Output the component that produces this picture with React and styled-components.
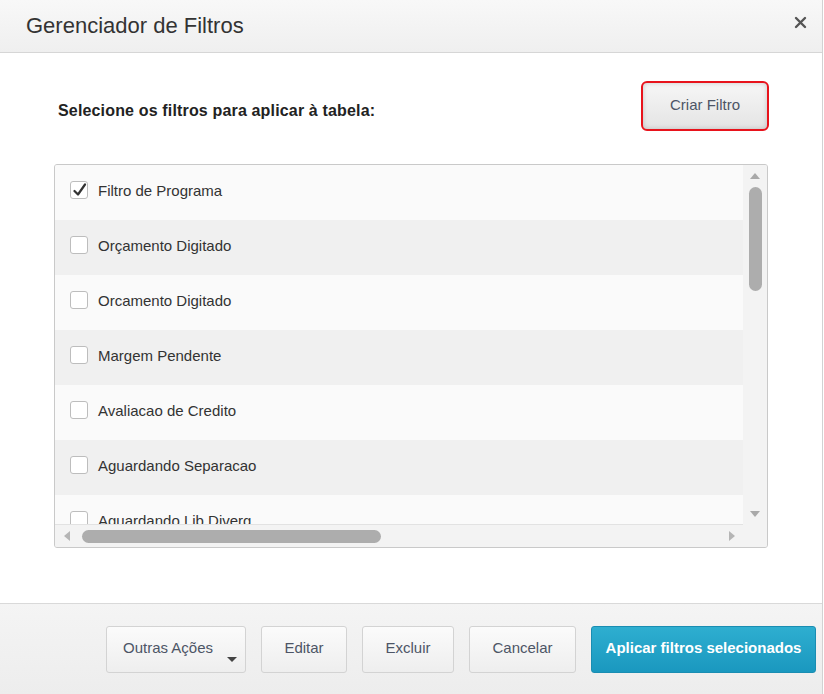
import React from 'react';
import styled, { createGlobalStyle } from 'styled-components';

const GlobalStyle = createGlobalStyle`
  html, body {
    margin: 0;
    padding: 0;
    background: #ffffff;
  }
  body {
    font-family: 'Liberation Sans', Arial, sans-serif;
  }
`;

const Modal = styled.div`
  width: 822px;
  height: 694px;
  display: flex;
  flex-direction: column;
  border-right: 1px solid #d2d2d2;
  background: #fff;
`;

const Header = styled.div`
  height: 52px;
  flex: none;
  display: flex;
  align-items: center;
  justify-content: space-between;
  padding: 0 14px 0 26px;
  background: linear-gradient(#f8f8f8, #efefef);
  border-bottom: 1px solid #d6d6d6;
`;

const Title = styled.h1`
  margin: 0;
  font-size: 22px;
  font-weight: normal;
  color: #333;
  padding-bottom: 1px;
`;

const CloseButton = styled.button`
  border: 0;
  background: none;
  padding: 0;
  width: 14px;
  height: 14px;
  display: flex;
  margin-bottom: 6px;
  cursor: pointer;
`;

const Body = styled.div`
  flex: 1;
  padding: 28px 54px 0 54px;
`;

const TopRow = styled.div`
  display: flex;
  align-items: center;
  justify-content: space-between;
  height: 50px;
`;

const Label = styled.div`
  font-size: 16px;
  font-weight: bold;
  letter-spacing: 0.16px;
  color: #222;
  padding: 10px 0 0 4px;
`;

const CreateButton = styled.button`
  width: 128px;
  height: 50px;
  margin-right: -1px;
  border: 2px solid #e8131c;
  border-radius: 6px;
  background: linear-gradient(#f6f6f6, #e4e4e4);
  box-shadow: inset 0 0 5px rgba(0, 0, 0, 0.18);
  font-family: inherit;
  font-size: 15px;
  color: #4d5566;
  padding: 0 0 4px;
  cursor: pointer;
`;

const ListBox = styled.div`
  margin-top: 33px;
  height: 382px;
  border: 1px solid #c9c9c9;
  border-radius: 3px;
  display: grid;
  grid-template-columns: 1fr 24px;
  grid-template-rows: 1fr 22px;
  overflow: hidden;
  background: #f4f4f4;
`;

const Rows = styled.div`
  overflow: hidden;
  border-bottom: 1px solid #e2e2e2;
`;

const Row = styled.label`
  height: 55px;
  display: flex;
  align-items: center;
  gap: 10px;
  padding: 0 0 5px 15px;
  box-sizing: border-box;
  background: ${(p) => (p.$even ? '#f0f0f0' : '#fafafa')};
  font-size: 15px;
  color: #333;
`;

const Box = styled.span`
  width: 16px;
  height: 16px;
  border: 1px solid #bdbdbd;
  border-radius: 3px;
  background: #fff;
  display: flex;
  align-items: center;
  justify-content: center;
  flex: none;
`;

const VScroll = styled.div`
  display: flex;
  flex-direction: column;
  align-items: center;
  padding: 8px 0 8px;
  background: #f3f3f3;
`;

const HScroll = styled.div`
  display: flex;
  align-items: center;
  padding: 0 8px 0 9px;
  background: #f3f3f3;
`;

const Corner = styled.div`
  background: #f3f3f3;
`;

const Arrow = styled.span`
  width: 0;
  height: 0;
  flex: none;
  border-style: solid;
  border-color: transparent;
  ${(p) =>
    p.$dir === 'up'
      ? 'border-width: 0 5px 6px 5px; border-bottom-color: #a9a9a9;'
      : p.$dir === 'down'
      ? 'border-width: 6px 5px 0 5px; border-top-color: #a9a9a9;'
      : p.$dir === 'left'
      ? 'border-width: 5px 6px 5px 0; border-right-color: #b5b5b5;'
      : 'border-width: 5px 0 5px 6px; border-left-color: #b5b5b5;'}
`;

const VThumb = styled.div`
  width: 13px;
  height: 104px;
  margin-top: 8px;
  border-radius: 7px;
  background: #adadad;
`;

const HThumb = styled.div`
  height: 13px;
  width: 299px;
  margin-left: 12px;
  border-radius: 7px;
  background: #adadad;
`;

const Spacer = styled.div`
  flex: 1;
`;

const Footer = styled.div`
  height: 91px;
  flex: none;
  border-top: 1px solid #d9d9d9;
  background: linear-gradient(#f4f4f4, #ededed);
  display: flex;
  align-items: flex-start;
  justify-content: flex-end;
  gap: 15px;
  padding: 22px 6px 0 0;
  box-sizing: border-box;
`;

const Button = styled.button`
  position: relative;
  width: ${(p) => p.$w}px;
  height: 47px;
  border-radius: 3px;
  font-family: inherit;
  font-size: 15px;
  cursor: pointer;
  text-align: ${(p) => (p.$menu ? 'left' : 'center')};
  padding: ${(p) => (p.$menu ? '0 0 5px 16px' : '0 0 5px')};
  border: 1px solid ${(p) => (p.$primary ? '#1a8db2' : '#d3d3d3')};
  background: ${(p) =>
    p.$primary ? 'linear-gradient(#2eaed0, #1a98bf)' : 'linear-gradient(#fbfbfb, #eeeeee)'};
  color: ${(p) => (p.$primary ? '#fff' : '#4d5566')};
  font-weight: ${(p) => (p.$primary ? 'bold' : 'normal')};
`;

const Caret = styled.span`
  position: absolute;
  right: 8px;
  bottom: 10px;
  border-style: solid;
  border-width: 5px 5px 0 5px;
  border-color: #444 transparent transparent transparent;
`;

const filters = [
  { name: 'Filtro de Programa', checked: true },
  { name: 'Orçamento Digitado' },
  { name: 'Orcamento Digitado' },
  { name: 'Margem Pendente' },
  { name: 'Avaliacao de Credito' },
  { name: 'Aguardando Separacao' },
  { name: 'Aguardando Lib Diverg' },
];

const Check = () => (
  <svg width="15" height="15" viewBox="0 0 15 15">
    <path d="M2.5 8 L6 11.5 L13 1.5" fill="none" stroke="#333" strokeWidth="2.2" strokeLinecap="round" strokeLinejoin="round" />
  </svg>
);

const App = () => (
  <>
    <GlobalStyle />
    <Modal>
      <Header>
        <Title>Gerenciador de Filtros</Title>
        <CloseButton aria-label="Fechar">
          <svg width="13" height="13" viewBox="0 0 13 13">
            <path d="M2 2 L11 11 M11 2 L2 11" stroke="#555" strokeWidth="2.4" strokeLinecap="round" />
          </svg>
        </CloseButton>
      </Header>
      <Body>
        <TopRow>
          <Label>Selecione os filtros para aplicar à tabela:</Label>
          <CreateButton>Criar Filtro</CreateButton>
        </TopRow>
        <ListBox>
          <Rows>
            {filters.map((f, i) => (
              <Row key={f.name} $even={i % 2 === 1}>
                <Box>{f.checked && <Check />}</Box>
                {f.name}
              </Row>
            ))}
          </Rows>
          <VScroll>
            <Arrow $dir="up" />
            <VThumb />
            <Spacer />
            <Arrow $dir="down" />
          </VScroll>
          <HScroll>
            <Arrow $dir="left" />
            <HThumb />
            <Spacer />
            <Arrow $dir="right" />
          </HScroll>
          <Corner />
        </ListBox>
      </Body>
      <Footer>
        <Button $w={140} $menu>
          Outras Ações
          <Caret />
        </Button>
        <Button $w={86}>Editar</Button>
        <Button $w={92}>Excluir</Button>
        <Button $w={107}>Cancelar</Button>
        <Button $w={225} $primary>
          Aplicar filtros selecionados
        </Button>
      </Footer>
    </Modal>
  </>
);

export default App;
